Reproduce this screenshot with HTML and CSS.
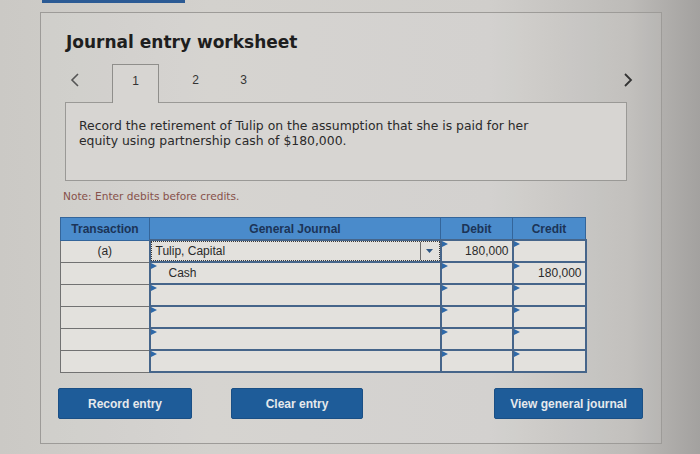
FILE: index.html
```html
<!DOCTYPE html>
<html lang="en">
<head>
<meta charset="utf-8">
<title>Journal entry worksheet</title>
<link rel="stylesheet" href="styles.css">
</head>
<body>
<div class="topbar"></div>
<div class="panel">
  <h1 class="title">Journal entry worksheet</h1>
  <div class="tabs">
    <span class="nav prev"><svg width="10" height="14" viewBox="0 0 10 14"><path d="M8 1 L2 7 L8 13" fill="none" stroke="#555" stroke-width="1.6"/></svg></span>
    <span class="tab active">1</span>
    <span class="tab tab2">2</span>
    <span class="tab tab3">3</span>
    <span class="nav next"><svg width="10" height="14" viewBox="0 0 10 14"><path d="M2 1 L8 7 L2 13" fill="none" stroke="#333" stroke-width="1.8"/></svg></span>
  </div>
  <div class="question">
    <p>Record the retirement of Tulip on the assumption that she is paid for her equity using partnership cash of $180,000.</p>
  </div>
  <p class="note">Note: Enter debits before credits.</p>
  <table class="journal">
    <thead>
      <tr>
        <th class="c-trx">Transaction</th>
        <th class="c-gj">General Journal</th>
        <th class="c-dr">Debit</th>
        <th class="c-cr">Credit</th>
      </tr>
    </thead>
    <tbody>
      <tr>
        <td class="trx">(a)</td>
        <td class="gj focus"><div class="select"><span class="sel-text">Tulip, Capital</span><span class="arrow"><svg width="7" height="4" viewBox="0 0 7 4"><path d="M0 0 H7 L3.5 4 Z" fill="#2d5684"/></svg></span></div></td>
        <td class="amt flag">180,000</td>
        <td class="amt flag"></td>
      </tr>
      <tr>
        <td class="trx"></td>
        <td class="gj flag indent">Cash</td>
        <td class="amt flag"></td>
        <td class="amt flag">180,000</td>
      </tr>
      <tr><td class="trx"></td><td class="gj flag"></td><td class="amt flag"></td><td class="amt flag"></td></tr>
      <tr><td class="trx"></td><td class="gj flag"></td><td class="amt flag"></td><td class="amt flag"></td></tr>
      <tr><td class="trx"></td><td class="gj flag"></td><td class="amt flag"></td><td class="amt flag"></td></tr>
      <tr><td class="trx"></td><td class="gj flag"></td><td class="amt flag"></td><td class="amt flag"></td></tr>
    </tbody>
  </table>
  <div class="actions">
    <button class="btn btn-record">Record entry</button>
    <button class="btn btn-clear">Clear entry</button>
    <button class="btn btn-view">View general journal</button>
  </div>
</div>
</body>
</html>
```

FILE: styles.css
```css
html, body {
  margin: 0;
  padding: 0;
}
body {
  width: 700px;
  height: 454px;
  overflow: hidden;
  background: linear-gradient(90deg, #cbc9c5 0%, #d3d1cd 30%, #d0cecb 70%, #bdbbb8 90%, #a3a19f 100%);
  font-family: "DejaVu Sans", Verdana, sans-serif;
  color: #2a2a2a;
}
.topbar {
  width: 143px;
  height: 3px;
  margin-left: 42px;
  background: #2b5a94;
}
.panel {
  box-sizing: border-box;
  width: 622px;
  height: 432px;
  margin: 9px 0 0 40px;
  border: 1px solid #9d9b98;
  background: rgba(255, 255, 255, 0.08);
}
.title {
  margin: 19px 0 0 25px;
  font-size: 17px;
  line-height: 20px;
  font-weight: bold;
  color: #1e1e1e;
}
.tabs {
  display: flex;
  align-items: flex-start;
  width: 575px;
  height: 38px;
  margin: 12px 0 0 24px;
  font-family: "Liberation Sans", Arial, sans-serif;
  font-size: 12px;
  line-height: 15px;
}
.nav {
  display: flex;
  align-items: center;
  height: 31px;
}
.prev {
  width: 42px;
  padding-left: 5px;
}
.next {
  margin-left: auto;
  padding-right: 7px;
}
.tab {
  box-sizing: border-box;
  width: 47px;
  height: 39px;
  padding-top: 9px;
  text-align: center;
  color: #333;
}
.tab.active {
  border: 1px solid #8f8e8b;
  border-bottom: none;
  background: #d7d5d2;
  position: relative;
  z-index: 1;
}
.tab2 { margin-left: 13px; }
.tab3 { margin-left: 1px; }
.question {
  box-sizing: border-box;
  width: 562px;
  height: 79px;
  margin-left: 24px;
  border: 1px solid #9a9996;
  background: #d7d5d2;
  padding: 15px 80px 0 13px;
}
.question p {
  margin: 0;
  font-size: 12.4px;
  line-height: 15px;
  color: #2a2a2a;
}
.note {
  margin: 8px 0 0 22px;
  font-size: 10.6px;
  line-height: 14px;
  color: #87514a;
}
.journal {
  margin: 14px 0 0 19px;
  width: 525px;
  border-collapse: collapse;
  font-family: "Liberation Sans", Arial, sans-serif;
  font-size: 12px;
  table-layout: fixed;
}
.journal th {
  height: 21px;
  padding: 0;
  background: #4a8bcb;
  border: 1px solid #34659a;
  color: #1c3457;
  font-weight: bold;
  text-align: center;
}
.c-trx { width: 88px; }
.c-gj { width: 290px; }
.c-dr { width: 71px; }
.c-cr { width: 72px; }
.journal td {
  height: 20px;
  padding: 0;
  background: #e3e1dd;
  color: #2a2a2a;
}
.journal td.trx {
  border: 1px solid #727272;
  text-align: center;
}
.journal td.gj,
.journal td.amt {
  border: 2px solid #46658a;
  position: relative;
}
.journal td.gj {
  padding-left: 5px;
}
.journal td.indent {
  padding-left: 18px;
}
.journal td.amt {
  text-align: right;
  padding-right: 3px;
}
.journal td.flag::before {
  content: "";
  position: absolute;
  top: 0;
  left: 0;
  border-top: 3px solid transparent;
  border-bottom: 3px solid transparent;
  border-left: 6px solid #2f69a8;
}
.journal td.focus {
  padding: 0;
}
.select {
  display: flex;
  box-sizing: border-box;
  height: 20px;
  border: 1px dotted #3a3a3a;
  align-items: stretch;
}
.sel-text {
  flex: 1;
  padding-left: 4px;
  line-height: 18px;
}
.arrow {
  width: 18px;
  border-left: 1px solid #6a6a6a;
  display: flex;
  align-items: center;
  justify-content: center;
}
.actions {
  display: flex;
  margin: 15px 0 0 17px;
}
.btn {
  box-sizing: border-box;
  height: 31px;
  border: 1px solid #1a4f85;
  border-radius: 2px;
  background: #1e5c99;
  color: #e6e9ec;
  font-family: "Liberation Sans", Arial, sans-serif;
  font-size: 12px;
  font-weight: bold;
  padding: 0;
}
.btn-record { width: 134px; }
.btn-clear { width: 132px; margin-left: 39px; }
.btn-view { width: 149px; margin-left: 131px; }
```
